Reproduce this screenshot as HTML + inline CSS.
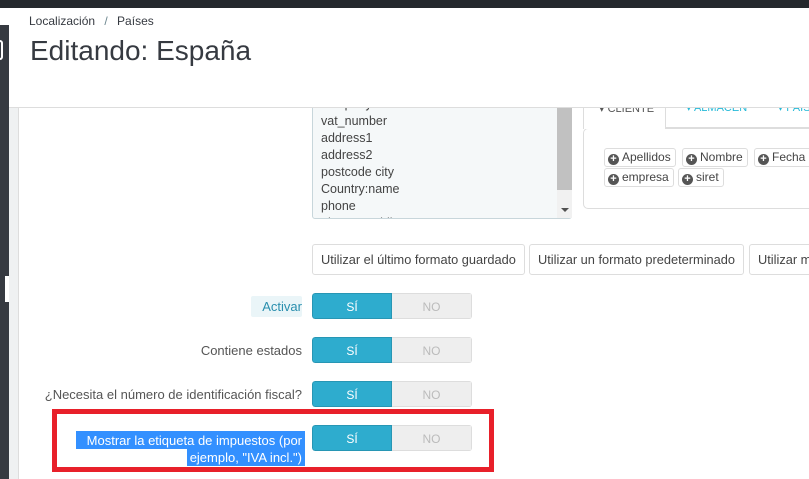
<!DOCTYPE html>
<html><head><meta charset="utf-8"><style>
*{margin:0;padding:0;box-sizing:border-box}
body{width:809px;height:479px;overflow:hidden;background:#fff;font-family:"Liberation Sans","DejaVu Sans",sans-serif;position:relative;color:#555}
.a{position:absolute}
.tog{position:absolute;left:312px;width:160px;height:26px;border-radius:3px;overflow:hidden;font-size:12px;display:flex}
.tog .s{width:80px;background:#2eacce;color:#fff;text-align:center;line-height:26px;border:1px solid #2796b4;border-radius:3px 0 0 3px}
.tog .n{width:80px;background:#eee;color:#bbb;text-align:center;line-height:26px;border:1px solid #ddd;border-left:none}
.lbl{position:absolute;right:507px;font-size:13px;color:#555;text-align:right}
.btn{position:absolute;top:244px;height:31px;border:1px solid #ddd;border-radius:3px;background:#fff;font-size:12.8px;color:#444;line-height:29px;padding:0 8px;white-space:nowrap}
.chip{position:absolute;height:19px;border:1px solid #ddd;border-radius:3px;font-size:12px;color:#444;line-height:17px;padding:0 4px 0 3px;white-space:nowrap}
.chip i{display:inline-block;width:11px;height:11px;border-radius:50%;background:#555;color:#fff;font-style:normal;font-size:11px;line-height:11px;text-align:center;font-weight:bold;margin-right:3px;vertical-align:-1px}
</style></head><body>
<div class="a" style="left:0;top:0;width:809px;height:8px;background:#25282d"></div>
<div class="a" style="left:0;top:25px;width:9px;height:454px;background:#363a41"></div>
<div class="a" style="left:5px;top:276px;width:4px;height:26px;background:#fff"></div>
<div class="a" style="left:9px;top:107px;width:10px;height:372px;background:#eff1f2;border-right:1px solid #ddd"></div>

<!-- textarea -->
<div class="a" style="left:312px;top:92px;width:260px;height:127px;background:#f5f8f9;border:1px solid #c8d6db;border-radius:3px;font-size:12.5px;color:#444;line-height:17px;padding:3px 8px;overflow:hidden">
company<br>vat_number<br>address1<br>address2<br>postcode city<br>Country:name<br>phone<br>phone_mobile</div>
<div class="a" style="left:557px;top:107px;width:15px;height:111px;background:#f1f1f1"></div>
<div class="a" style="left:557px;top:107px;width:15px;height:83px;background:#c1c1c1"></div>
<div class="a" style="left:561px;top:208px;width:0;height:0;border-left:4px solid transparent;border-right:4px solid transparent;border-top:4px solid #505050"></div>

<!-- right panel -->
<div class="a" style="left:583px;top:128px;width:240px;height:81px;border:1px solid #ddd;border-radius:5px"></div>
<div class="a" style="left:583px;top:90px;width:83px;height:39px;border:1px solid #ddd;border-bottom:none;background:#fff;font-size:11px;color:#555;padding:11px 0 0 15px">▾ CLIENTE</div>
<div class="a" style="left:666px;top:90px;width:160px;height:38px;border-bottom:1px solid #ddd;font-size:11px;color:#25b9d7;padding:11px 0 0 20px;white-space:nowrap">▾ ALMACEN &nbsp;&nbsp;&nbsp;&nbsp;&nbsp;&nbsp;&nbsp;&nbsp;&nbsp;▾ PAÍS</div>
<div class="chip" style="left:604px;top:148px"><i>+</i>Apellidos</div>
<div class="chip" style="left:682px;top:148px"><i>+</i>Nombre</div>
<div class="chip" style="left:754px;top:148px;width:70px"><i>+</i>Fecha</div>
<div class="chip" style="left:604px;top:168px"><i>+</i>empresa</div>
<div class="chip" style="left:678px;top:168px"><i>+</i>siret</div>

<!-- header -->
<div class="a" style="left:9px;top:8px;width:800px;height:100px;background:#fff;border-bottom:1px solid #ddd"></div>
<div class="a" style="left:29px;top:14px;font-size:12px;color:#363a41">Localización <span style="color:#6c868e;margin:0 6px">/</span> Países</div>
<div class="a" style="left:30px;top:35px;font-size:28px;color:#363a41">Editando: España</div>
<div class="a" style="left:0;top:40px;width:3px;height:20px;border:2px solid #fff;border-left:none;border-radius:0 10px 10px 0"></div>

<div class="btn" style="left:312px">Utilizar el último formato guardado</div>
<div class="btn" style="left:529px">Utilizar un formato predeterminado</div>
<div class="btn" style="left:749px;width:70px">Utilizar m</div>

<div class="a" style="left:251px;top:296px;width:51px;height:21px;background:#eaf5f8;border-radius:2px"></div>
<div class="lbl" style="top:299px;color:#2a8fae">Activar</div>
<div class="tog" style="top:293px"><div class="s">SÍ</div><div class="n">NO</div></div>
<div class="lbl" style="top:343px">Contiene estados</div>
<div class="tog" style="top:337px"><div class="s">SÍ</div><div class="n">NO</div></div>
<div class="lbl" style="top:387px">¿Necesita el número de identificación fiscal?</div>
<div class="tog" style="top:381px"><div class="s">SÍ</div><div class="n">NO</div></div>
<div class="tog" style="top:425px"><div class="s">SÍ</div><div class="n">NO</div></div>
<div class="a" style="left:76px;top:431px;width:229px;height:18px;background:#3390ff"></div>
<div class="a" style="left:187px;top:449px;width:118px;height:17px;background:#3390ff"></div>
<div class="lbl" style="top:432px;color:#fff;line-height:17px">Mostrar la etiqueta de impuestos (por<br>ejemplo, "IVA incl.")</div>
<div class="a" style="left:52px;top:409px;width:442px;height:63px;border:5px solid #e8202a"></div>
</body></html>
